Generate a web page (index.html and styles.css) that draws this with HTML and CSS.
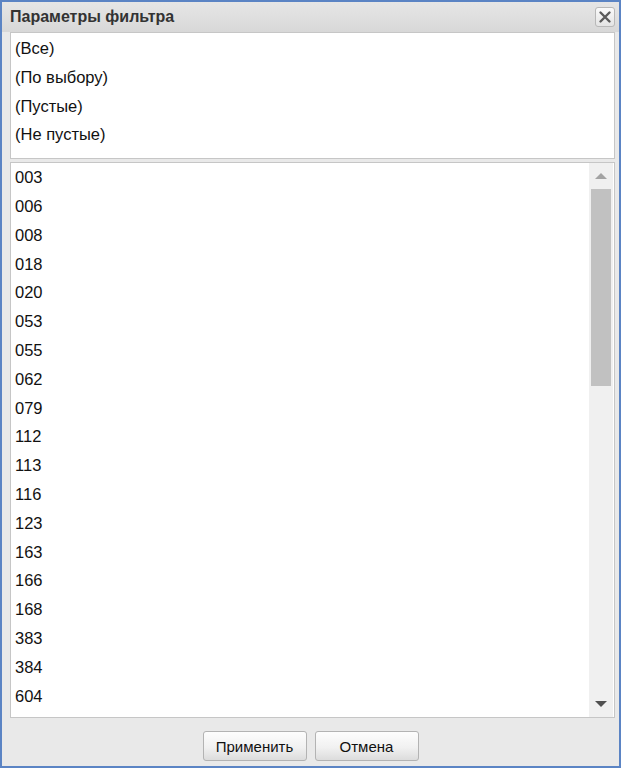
FILE: index.html
```html
<!DOCTYPE html>
<html lang="ru">
<head>
    <meta charset="UTF-8">
    <title>Параметры фильтра</title>
    <link rel="stylesheet" href="styles.css">
</head>
<body>
    <div class="dialog">
        <div class="dialog-header">
            <span class="dialog-title">Параметры фильтра</span>
            <button class="close-btn" aria-label="Закрыть">
                <svg width="14" height="14" viewBox="0 0 14 14">
                    <path d="M2.5 2.5 L11.5 11.5 M11.5 2.5 L2.5 11.5" stroke="#5a5a5a" stroke-width="2.4" stroke-linecap="round"/>
                </svg>
            </button>
        </div>

        <div class="dialog-body">
            <ul class="option-list">
                <li>(Все)</li>
                <li>(По выбору)</li>
                <li>(Пустые)</li>
                <li>(Не пустые)</li>
            </ul>

            <div class="value-box">
                <ul class="value-list">
                    <li>003</li>
                    <li>006</li>
                    <li>008</li>
                    <li>018</li>
                    <li>020</li>
                    <li>053</li>
                    <li>055</li>
                    <li>062</li>
                    <li>079</li>
                    <li>112</li>
                    <li>113</li>
                    <li>116</li>
                    <li>123</li>
                    <li>163</li>
                    <li>166</li>
                    <li>168</li>
                    <li>383</li>
                    <li>384</li>
                    <li>604</li>
                </ul>
                <div class="scrollbar">
                    <div class="scroll-arrow up"></div>
                    <div class="scroll-track">
                        <div class="scroll-thumb"></div>
                    </div>
                    <div class="scroll-arrow down"></div>
                </div>
            </div>
        </div>

        <div class="dialog-footer">
            <button class="btn">Применить</button>
            <button class="btn">Отмена</button>
        </div>
    </div>
</body>
</html>
```

FILE: styles.css
```css
/* Filter dialog */
:root {
    --frame: #5b84c4;
    --panel: #e9e9e9;
    --border: #c6c6c6;
    --text: #111;
}

body {
    margin: 0;
    font-family: "Liberation Sans", Arial, sans-serif;
}

.dialog {
    width: 621px;
    height: 768px;
    box-sizing: border-box;
    border: 2px solid var(--frame);
    background: var(--panel);
    display: flex;
    flex-direction: column;
}

/* Header */
.dialog-header {
    height: 30px;
    flex: none;
    display: flex;
    align-items: center;
    justify-content: space-between;
    padding: 0 4px 0 8px;
    background: linear-gradient(#e6e6e6, #d8d8d8);
}

.dialog-title {
    font-size: 16px;
    font-weight: 700;
    color: #333;
}

.close-btn {
    width: 20px;
    height: 20px;
    padding: 0;
    display: flex;
    align-items: center;
    justify-content: center;
    background: linear-gradient(#fafafa, #e4e4e4);
    border: 1px solid #b8b8b8;
    border-radius: 3px;
    cursor: pointer;
}

/* Body */
.dialog-body {
    flex: 1;
    display: flex;
    flex-direction: column;
    gap: 3px;
    padding: 0 4px 0 8px;
    min-height: 0;
}

ul {
    list-style: none;
    margin: 0;
    padding: 0;
}

.option-list {
    flex: none;
    background: #fff;
    border: 1px solid var(--border);
    padding: 1px 4px 9px 4px;
}

.option-list li,
.value-list li {
    font-size: 16.5px;
    line-height: 28.8px;
    color: var(--text);
}

.value-box {
    flex: 1;
    min-height: 0;
    display: flex;
    background: #fff;
    border: 1px solid var(--border);
}

.value-list {
    flex: 1;
    overflow: hidden;
    padding: 0 4px;
}

/* Scrollbar */
.scrollbar {
    width: 24px;
    flex: none;
    margin-right: 1px;
    display: flex;
    flex-direction: column;
    background: #f0f0f0;
}

.scroll-arrow {
    height: 26px;
    flex: none;
    display: flex;
    align-items: center;
    justify-content: center;
}

.scroll-arrow::before {
    content: "";
    border-left: 6px solid transparent;
    border-right: 6px solid transparent;
}

.scroll-arrow.up::before {
    border-bottom: 6px solid #a3a3a3;
}

.scroll-arrow.down::before {
    border-top: 6px solid #505050;
}

.scroll-track {
    flex: 1;
    padding: 0 2px;
}

.scroll-thumb {
    height: 197px;
    background: #c1c1c1;
}

/* Footer */
.dialog-footer {
    height: 48px;
    flex: none;
    display: flex;
    align-items: center;
    justify-content: center;
    gap: 8px;
    padding-top: 8px;
    box-sizing: border-box;
}

.btn {
    width: 104px;
    height: 30px;
    font-family: "Liberation Sans", Arial, sans-serif;
    font-size: 15px;
    color: #111;
    background: linear-gradient(#fdfdfd 0%, #f1f1f1 55%, #dcdcdc 100%);
    border: 1px solid #b3b3b3;
    border-radius: 3px;
    cursor: pointer;
}
```
